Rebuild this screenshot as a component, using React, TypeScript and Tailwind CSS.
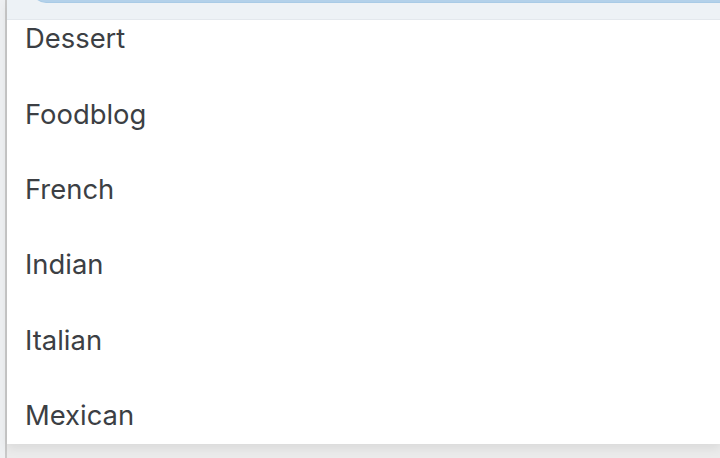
const items = ["Dessert", "Foodblog", "French", "Indian", "Italian", "Mexican"];

export default function App() {
  return (
    <div
      className="flex h-[458px] w-[720px] overflow-hidden bg-[#ebebeb]"
      style={{ fontFamily: "Inter, 'Noto Sans', sans-serif" }}
    >
      <div className="w-[5px] shrink-0 bg-[#eef0f2]" />
      <div className="w-[2px] shrink-0 bg-[#c9c9c9]" />
      <div className="flex h-[444px] flex-1 flex-col bg-white shadow-[0_4px_10px_rgba(0,0,0,0.08)]">
        <div className="h-[20px] shrink-0 border-b border-[#e3e8ed] bg-[#edf2f6] pl-[25px]">
          <div className="-mt-[20px] h-[23px] rounded-bl-[14px] bg-[#a9cbe6] pl-[1px] pb-[1px]">
            <div className="h-full rounded-bl-[13px] bg-[#b3d1ea]" />
          </div>
        </div>
        <div className="flex-1 overflow-hidden">
          <ul className="-mt-[19px]">
            {items.map((item) => (
              <li
                key={item}
                className="flex h-[75.4px] items-center pl-[18px] text-[27.4px] text-[#3c3f44]"
              >
                {item}
              </li>
            ))}
          </ul>
        </div>
      </div>
    </div>
  );
}
